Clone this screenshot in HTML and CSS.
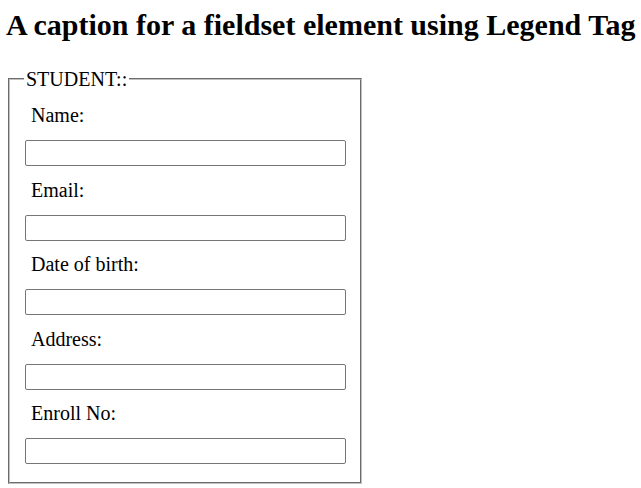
FILE: index.html
```html
<!DOCTYPE html>
<html>
<head>
<meta charset="utf-8">
<link rel="stylesheet" href="styles.css">
</head>
<body>
<h1 class="title">A caption for a fieldset element using Legend Tag</h1>
<form class="form">
<fieldset class="box">
<legend class="legend">STUDENT::</legend>
<label class="lbl">Name:</label>
<input class="field" type="text">
<label class="lbl">Email:</label>
<input class="field" type="text">
<label class="lbl">Date of birth:</label>
<input class="field" type="text">
<label class="lbl">Address:</label>
<input class="field" type="text">
<label class="lbl">Enroll No:</label>
<input class="field" type="text">
</fieldset>
</form>
</body>
</html>
```
FILE: styles.css
```css
html, body { margin: 0; padding: 0; background: #fff; }
body {
  padding: 8px 6px;
  font-family: "Liberation Serif", "Times New Roman", serif;
  color: #000;
}
.title {
  margin: 0 0 25.5px 0;
  font-size: 30px;
  font-weight: bold;
  line-height: 34px;
  white-space: nowrap;
}
.form { margin: 0 0 0 2px; }
.box {
  width: 353px;
  box-sizing: border-box;
  margin: 0;
  padding: 1px 14px 18px 15px;
  border: 2px groove rgb(192,192,192);
  display: flex;
  flex-direction: column;
  align-items: flex-start;
}
.legend {
  font-size: 20px;
  line-height: 23px;
  padding: 0 2px;
  margin-left: -1px;
}
.lbl {
  font-size: 20px;
  line-height: 23px;
  margin: 12.5px 0 0 6px;
}
.field {
  margin: 13px 0 0 0;
  width: 321px;
  height: 26px;
  box-sizing: border-box;
  border: 1px solid #767676;
  border-radius: 2px;
  padding: 1px 2px;
  font-size: 20px;
}
```
